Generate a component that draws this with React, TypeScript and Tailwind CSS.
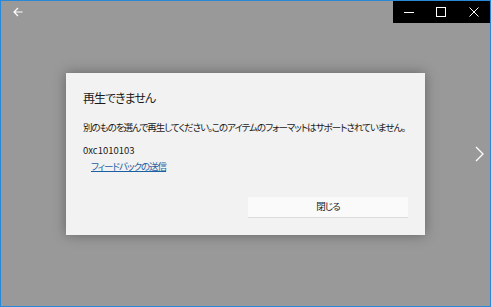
import React from 'react'

const jp = "font-['Noto_Sans_CJK_JP','Noto_Sans',sans-serif] [font-feature-settings:'palt']"

function TitleButtons() {
  return (
    <div className="absolute right-0 top-0 flex h-[22px] w-[97px] bg-black text-white">
      <div className="flex flex-1 items-center justify-center">
        <svg width="10" height="10" viewBox="0 0 10 10">
          <path d="M0 5.5h10" stroke="#fff" strokeWidth="1" />
        </svg>
      </div>
      <div className="flex flex-1 items-center justify-center">
        <svg width="10" height="10" viewBox="0 0 10 10">
          <rect x="0.5" y="0.5" width="9" height="9" fill="none" stroke="#fff" strokeWidth="1" />
        </svg>
      </div>
      <div className="flex flex-1 items-center justify-center">
        <svg width="10" height="10" viewBox="0 0 10 10">
          <path d="M0.5 0.5l9 9M9.5 0.5l-9 9" stroke="#fff" strokeWidth="1" />
        </svg>
      </div>
    </div>
  )
}

export default function App() {
  return (
    <div className={`relative flex h-[307px] w-[491px] items-center justify-center overflow-hidden border border-[#2b88d8] bg-[#999999] ${jp}`}>

      {/* back arrow */}
      <div className="absolute left-[12px] top-[6px]">
        <svg width="10" height="10" viewBox="0 0 10 10">
          <path d="M9.5 5H1M5 1L1 5l4 4" stroke="#fff" strokeWidth="1.2" fill="none" />
        </svg>
      </div>

      <TitleButtons />

      {/* next */}
      <div className="absolute right-[6px] top-[145px]">
        <svg width="9" height="16" viewBox="0 0 9 16">
          <path d="M1 1l7 7-7 7" stroke="#fff" strokeWidth="1.3" fill="none" />
        </svg>
      </div>

      {/* dialog */}
      <div className="flex w-[359px] flex-col bg-[#f2f2f2] px-[17px] pb-[17px] pt-[17px] shadow-[0_0_12px_rgba(0,0,0,0.35)]">
        <h1 className="text-[12px] leading-[16px] tracking-[-1px] text-[#1a1a1a]">再生できません</h1>
        <p className="mt-[14px] whitespace-nowrap text-[9.5px] leading-[14px] tracking-[-1px] text-[#1a1a1a]">
          別のものを選んで再生してください。このアイテムのフォーマットはサポートされていません。
        </p>
        <p className="mt-[9px] text-[9.5px] leading-[14px] text-[#1a1a1a]">0xc1010103</p>
        <a className="ml-[8px] mt-[2px] text-[9.5px] leading-[14px] tracking-[-1px] text-[#1e5fa3] underline">
          フィードバックの送信
        </a>
        <div className="mt-[24px] flex justify-end">
          <button className="h-[21px] w-[160px] border-b border-[#dcdcdc] bg-[#fafafa] text-[9.5px] tracking-[-1px] text-[#1a1a1a]">
            閉じる
          </button>
        </div>
      </div>

    </div>
  )
}
